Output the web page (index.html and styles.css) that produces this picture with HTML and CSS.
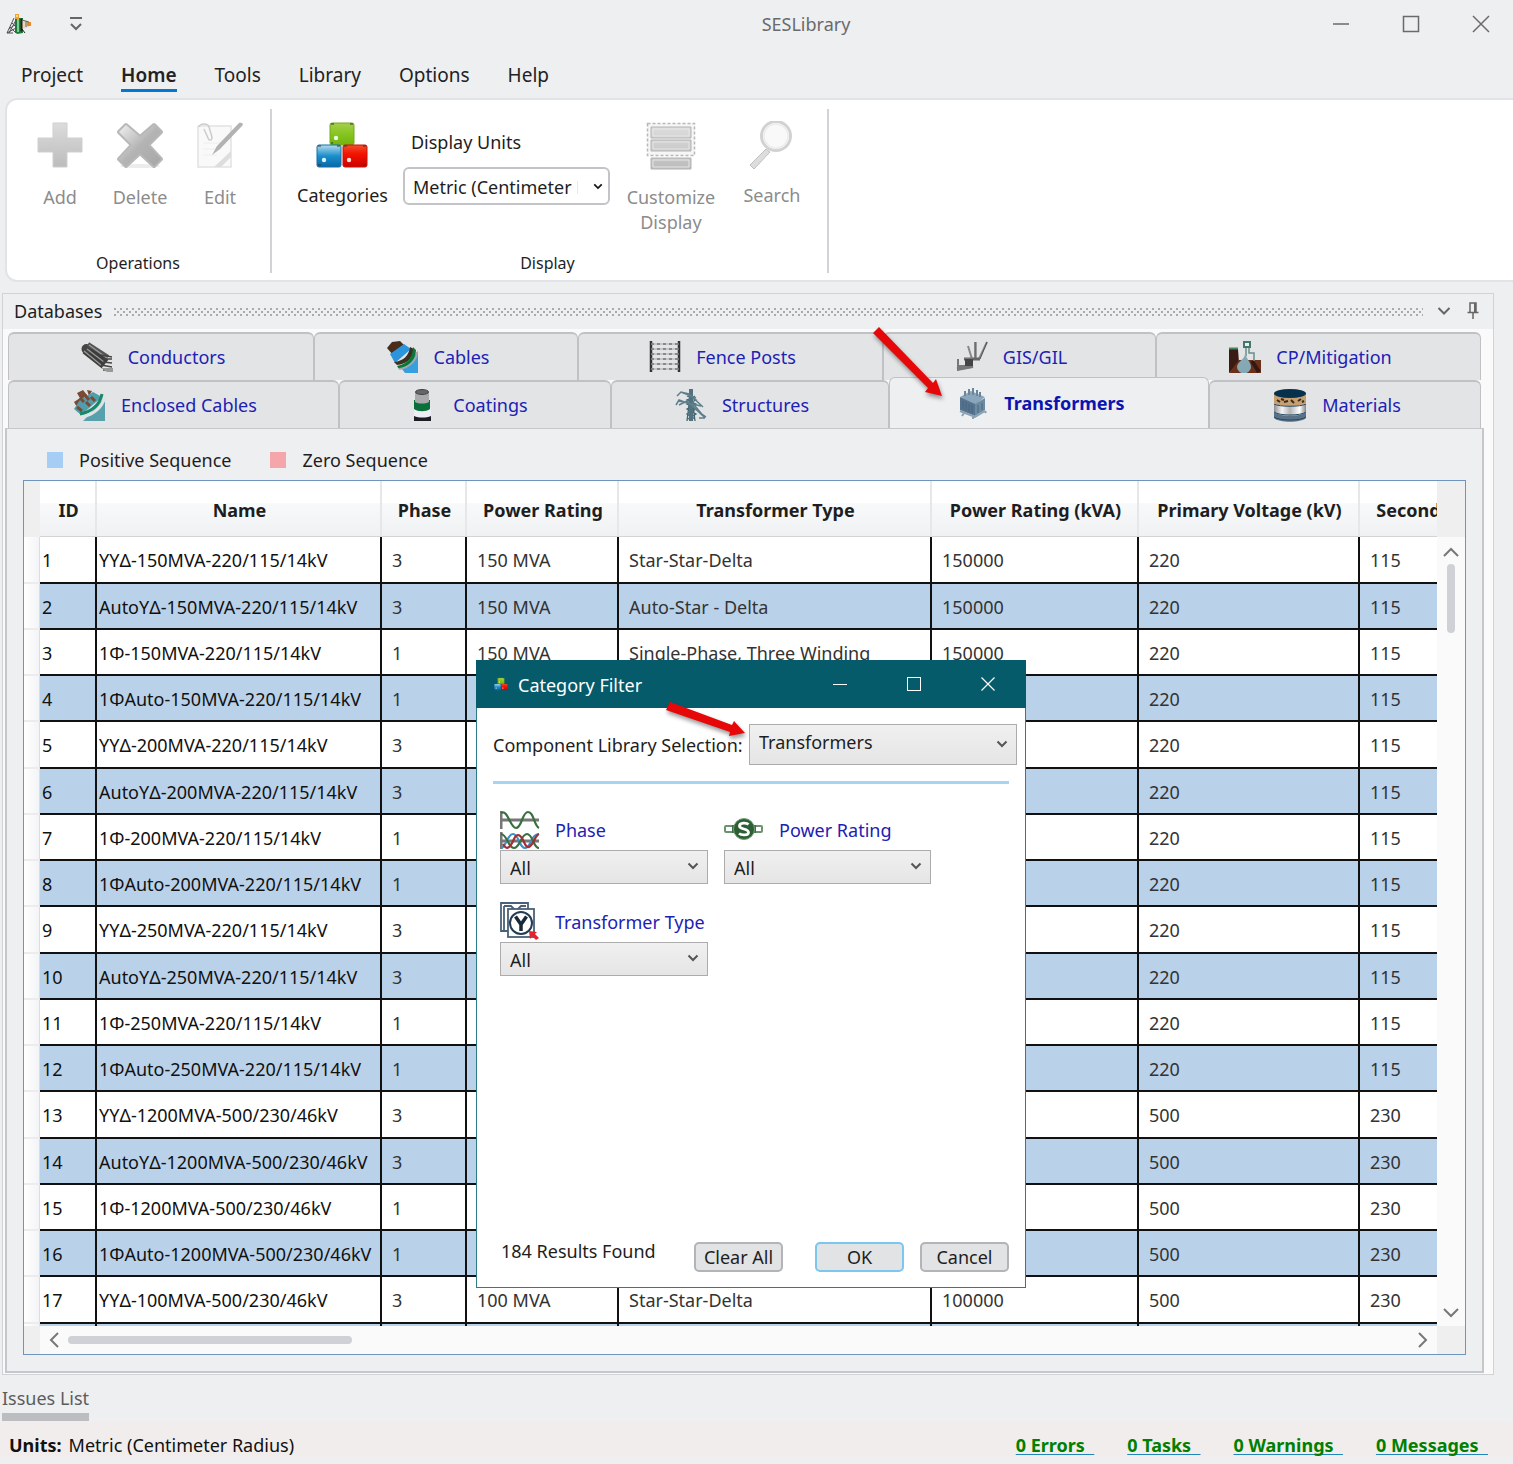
FILE: index.html
```html
<!DOCTYPE html>
<html lang="en">
<head>
  <meta charset="UTF-8" />
  <meta name="viewport" content="width=device-width, initial-scale=1.0"/>
  <title>SESLibrary</title>
  <link rel="stylesheet" href="styles.css">
</head>
<body>

  <!-- Shared gradients and symbols -->
  <svg class="defs" width="0" height="0" aria-hidden="true">
    <defs>
      <linearGradient id="gray" x1="0" y1="0" x2="0" y2="1"><stop offset="0" stop-color="#dcdcdc"/><stop offset="1" stop-color="#bcbcbc"/></linearGradient>
      <linearGradient id="grayDiag" x1="0" y1="0" x2="1" y2="1"><stop offset="0" stop-color="#f0f0f0"/><stop offset=".5" stop-color="#b4b4b4"/><stop offset="1" stop-color="#a6a6a6"/></linearGradient>
      <linearGradient id="green" x1="0" y1="0" x2="0" y2="1"><stop offset="0" stop-color="#a4cf4c"/><stop offset=".5" stop-color="#86c520"/><stop offset="1" stop-color="#74b20c"/></linearGradient>
      <linearGradient id="blue" x1="0" y1="0" x2="0" y2="1"><stop offset="0" stop-color="#b4dcee"/><stop offset=".5" stop-color="#1b8ecb"/><stop offset="1" stop-color="#0867a8"/></linearGradient>
      <linearGradient id="red" x1="0" y1="0" x2="0" y2="1"><stop offset="0" stop-color="#f2502c"/><stop offset=".4" stop-color="#f41400"/><stop offset="1" stop-color="#cc0000"/></linearGradient>
      <linearGradient id="steel" x1="0" y1="0" x2="1" y2="0"><stop offset="0" stop-color="#8d8f92"/><stop offset=".25" stop-color="#f4f4f4"/><stop offset=".5" stop-color="#b5b5b5"/><stop offset=".8" stop-color="#fff"/><stop offset="1" stop-color="#85878a"/></linearGradient>
      <symbol id="cubes" viewBox="0 0 52 46">
        <rect x="14" y="1" width="24" height="22" rx="2" fill="url(#green)" stroke="#76a81c"/>
        <rect x="1" y="23" width="24" height="22" rx="2" fill="url(#blue)" stroke="#1470a8"/>
        <rect x="27" y="23" width="24" height="22" rx="2" fill="url(#red)" stroke="#c81408"/>
        <path d="M15 2h3M34 2h3M15 21h2M2 24h3M21 24h3M28 24h3M47 24h3M2 43h3M47 43h3" stroke="#333" stroke-opacity=".5" stroke-width="2"/>
        <circle cx="20" cy="16" r="2.2" fill="#e8ffe0"/><circle cx="8" cy="38" r="2.2" fill="#d8f4ff"/><circle cx="33" cy="38" r="2.2" fill="#ffe0dc"/>
      </symbol>
      <symbol id="chevron" viewBox="0 0 12 8"><path d="M1.5 1.5 6 6l4.500-4.500" fill="none" stroke="currentColor" stroke-width="2"/></symbol>
    </defs>
  </svg>

  <header class="titlebar">
    <div class="quick">
      <svg width="27" height="22" viewBox="0 0 27 22">
        <path d="M1 20 8 5M3 20 10 7M1 20l9-5M4 14l6 6M3 16l7-5M6 10l4 4M1 20h6" stroke="#555" fill="none"/>
        <path d="M9 5h8v15l-6 1-2-2z" fill="#1d7a3a"/><path d="M11 6h2v13h-2z" fill="#7cd090"/>
        <path d="M16 7l7 2v5l-7 2z" fill="#e8d8b8"/><path d="M15 6h1v12h-1zM16 16l3 4" fill="#222" stroke="#222"/>
        <path d="M21 9h4v4h-4z" fill="#e88828"/><path d="M20 8v6M16 7l7 2" stroke="#665"/>
        <path d="M9 1h4v5H9z" fill="#f0a030"/><circle cx="11" cy="3" r="1" fill="#fff0a0"/>
      </svg>
      <button class="plain" aria-label="Customize quick access"><svg width="14" height="16" viewBox="0 0 14 16"><path d="M1 2h12M2 8l5 5 5-5" fill="none" stroke="#666" stroke-width="2"/></svg></button>
    </div>
    <h1>SESLibrary</h1>
    <div class="controls">
      <button class="plain" aria-label="Minimize"><svg width="18" height="18"><path d="M1 9h16" stroke="#6a6a6a" stroke-width="1.500"/></svg></button>
      <button class="plain" aria-label="Maximize"><svg width="18" height="18"><rect x="1.500" y="1.500" width="15" height="15" fill="none" stroke="#6a6a6a" stroke-width="1.500"/></svg></button>
      <button class="plain" aria-label="Close"><svg width="18" height="18"><path d="M1 1l16 16M17 1 1 17" stroke="#6a6a6a" stroke-width="1.500"/></svg></button>
    </div>
  </header>

  <nav class="menu">
    <a href="#">Project</a>
    <a href="#" class="current">Home</a>
    <a href="#">Tools</a>
    <a href="#">Library</a>
    <a href="#">Options</a>
    <a href="#">Help</a>
  </nav>

  <div class="ribbon">
    <section class="group operations">
      <div class="tools">
        <button class="tool" disabled>
          <svg width="48" height="48" viewBox="0 0 48 48"><path d="M17 2h14v15h15v14H31v15H17V31H2V17h15z" fill="url(#gray)" stroke="#cfcfcf"/></svg>
          Add
        </button>
        <button class="tool" disabled>
          <svg width="48" height="48" viewBox="0 0 48 48"><ellipse cx="24" cy="45" rx="20" ry="2" fill="#ececec"/><path d="M10 4 24 16 38 4l7 7-13 13 13 14-7 7-14-13-14 13-7-7 13-14L3 11z" fill="url(#grayDiag)" stroke="#b8b8b8" stroke-linejoin="round" stroke-width="4"/><path d="M10 4 24 16 38 4l7 7-13 13 13 14-7 7-14-13-14 13-7-7 13-14L3 11z" fill="url(#grayDiag)"/></svg>
          Delete
        </button>
        <button class="tool" disabled>
          <svg width="48" height="48" viewBox="0 0 48 48"><path d="M2 5h33v41H2z" fill="#f9f9f9" stroke="#e2e2e2" stroke-width="1.500"/><path d="M7 22h22M7 28h18M7 34h14" stroke="#eee"/><path d="M18 46 35 30v6L25 46z" fill="#ddd"/><path d="M3 6c1-4 9-4 10 0l3 10c0 4-3 4-4 1L8 8" fill="none" stroke="#ccc" stroke-width="1.500"/><path d="M43 2c3-1 5 1 3 3L24 28l-8 6 5-9z" fill="#b2b2b2"/></svg>
          Edit
        </button>
      </div>
      <h2>Operations</h2>
    </section>

    <section class="group display">
      <div class="tools">
        <button class="tool">
          <svg width="52" height="48"><use href="#cubes" width="52" height="48"/></svg>
          Categories
        </button>
        <div class="units">
          <label for="units">Display Units</label>
          <div class="select rounded">
            <select id="units"><option>Metric (Centimeter Radius)</option></select>
            <svg width="10" height="7"><use href="#chevron"/></svg>
          </div>
        </div>
        <button class="tool customize" disabled>
          <svg width="50" height="50" viewBox="0 0 50 50"><path d="M1.500 2.500h47v32h-47z" fill="#f6f6f6" stroke="#b8b8b8" stroke-width="1.500" stroke-dasharray="3 2"/><g fill="url(#gray)" stroke="#b4b4b4"><path d="M5 6h40v11H5zM5 19h40v11H5zM5 37h40v11H5z"/></g><path d="M7 8h36v7H7zM7 21h36v7H7zM7 39h36v7H7z" fill="none" stroke="#e6e6e6"/></svg>
          Customize Display
        </button>
        <button class="tool" disabled>
          <svg width="48" height="48" viewBox="0 0 48 48"><path d="M18 28 2 44l4 4 16-17z" fill="#ddd" stroke="#c0c0c0"/><circle cx="28" cy="15" r="14.500" fill="#f9f9f9" stroke="#d2d2d2" stroke-width="3"/><circle cx="28" cy="15" r="12" fill="none" stroke="#eee" stroke-width="2"/></svg>
          Search
        </button>
      </div>
      <h2>Display</h2>
    </section>
  </div>

  <main class="panel">
    <div class="panel-head">
      <h2>Databases</h2>
      <div class="grip"></div>
      <button class="plain" aria-label="Panel menu"><svg width="14" height="10" viewBox="0 0 14 10"><path d="M1.500 2 7 7.500 12.500 2" fill="none" stroke="#666" stroke-width="2"/></svg></button>
      <button class="plain" aria-label="Pin panel"><svg width="12" height="17" viewBox="0 0 12 17"><path d="M3 10V1h6v9M.5 10.500h11M6 10.500V17" fill="none" stroke="#666" stroke-width="1.500"/><path d="M7 1h2v9H7z" fill="#666"/></svg></button>
    </div>

    <div class="tabs" role="tablist">
      <div class="tab-row upper">
        <button class="tab" role="tab">
          <svg width="32" height="32" viewBox="0 0 32 32"><path d="M5 8 24 23" stroke="#3c3c3c" stroke-width="11"/><circle cx="5.500" cy="8" r="5" fill="#444"/><path d="M7 3 27 16" stroke="#555" stroke-width="4"/><path d="M3 10 20 24M6 8l17 13M8 4l18 13" stroke="#999" stroke-width="1.300"/><path d="M20 14l11 2M22 18h9M22 21l9 1M20 24l11 2M22 29h9" stroke="#444" stroke-width="1.500"/><path d="M20 27h12v4h-6z" fill="#999"/></svg>
          Conductors
        </button>
        <button class="tab" role="tab">
          <svg width="32" height="32" viewBox="0 0 32 32"><path d="M15 28 31 10v22H18z" fill="#379fdd"/><path d="M5 1 13 0l5 5-12 9-6-7z" fill="#4a2c1a"/><path d="M3 13 17 3l7 5L8 22z" fill="#2a94dc"/><path d="M7 21C17 20 22 14 23 6l4 2c-1 10-8 15-17 16z" fill="#3c3020"/><path d="M10 25C20 23 26 17 26 6l3 3c0 10-8 17-17 19z" fill="#0a7838"/><path d="M12 28c10-1 18-9 18-17" fill="none" stroke="#a4a8ac" stroke-width="2"/></svg>
          Cables
        </button>
        <button class="tab" role="tab">
          <svg width="32" height="32" viewBox="0 0 32 32"><path d="M2 0v31M30 0v31" stroke="#333" stroke-width="2.500"/><path d="M2 3h28M2 8h28M2 13h28M2 18h28M2 23h28M2 28h28" stroke="#aaa" stroke-width="1.200"/><path d="M2 3h28M2 8h28M2 13h28M2 18h28M2 23h28M2 28h28" stroke="#777" stroke-width="1.500" stroke-dasharray="3 3"/></svg>
          Fence Posts
        </button>
        <button class="tab" role="tab">
          <svg width="32" height="32" viewBox="0 0 32 32"><path d="M31 1 23 18M19 1v16M12 5l4 13" stroke="#888" stroke-width="2"/><path d="M31 1 24 18M20 1v16" stroke="#555"/><path d="M8 18h16M1 28l16-3" stroke="#666" stroke-width="3"/><path d="M1 18v12l16-3V17H9v7H3v-6z" fill="#777"/><path d="M9 18h8v7H9z" fill="#444"/></svg>
          GIS/GIL
        </button>
        <button class="tab" role="tab">
          <svg width="32" height="32" viewBox="0 0 32 32"><path d="M0 8h9l1 14-10 10z" fill="#3a1c14"/><path d="M0 7.500h9" stroke="#3f8a60" stroke-width="2"/><path d="M0 32l10-13h22v13z" fill="#6b301c"/><path d="M23 20l7 11" stroke="#351810" stroke-width="4"/><path d="M15 1h6v5h-6z" fill="#e8f0ee" stroke="#44786c" stroke-width="2"/><path d="M17 7v8M20 7v5h5v8" fill="none" stroke="#6a9088" stroke-width="1.500"/><path d="M16 13c0 5-8 8-8 13a6.500 6 0 0 0 14 0c0-5-5-8-5-13z" fill="#84a8b4"/></svg>
          CP/Mitigation
        </button>
      </div>
      <div class="tab-row lower">
        <button class="tab" role="tab">
          <svg width="32" height="32" viewBox="0 0 32 32"><path d="M3 4l6-3 4 5-6 5zM13 1l5 1-3 5zM0 13l6-4 4 6-6 5z" fill="#7a4a34"/><path d="M0 20 6 11 19 3l9 5L7 26z" fill="#4f9dad"/><path d="M6 9l4 4M11 6l4 5M3 18l5 4M12 13l4 4M17 8l4 4" stroke="#7a4a34" stroke-width="3"/><path d="M12 29 31 8v24H9z" fill="#58a0ac"/><path d="M6 25C17 23 26 16 28 5" fill="none" stroke="#178868" stroke-width="3"/><path d="M9 28C20 25 28 18 31 8" fill="none" stroke="#dfe3e4" stroke-width="3"/></svg>
          Enclosed Cables
        </button>
        <button class="tab" role="tab">
          <svg width="32" height="32" viewBox="0 0 32 32"><path d="M8 26h17v6H8z" fill="#1c1c24"/><path d="M8 19h17v8c-5 2-12 2-17 0z" fill="#ededf5"/><path d="M8 11h16v9c-4 3-12 3-16 0z" fill="#087038"/><path d="M9 3h14v10c-4 2-10 2-14 0z" fill="#a8aaac"/><ellipse cx="16" cy="3" rx="6.500" ry="2.500" fill="#666" stroke="#444"/></svg>
          Coatings
        </button>
        <button class="tab" role="tab">
          <svg width="32" height="32" viewBox="0 0 32 32"><path d="M16 0l-4 32M16 0l4 32M12 7l9 4-9 4 9 5-9 5 8 5M20 7l-8 4 9 4-9 5 9 5-8 5" fill="none" stroke="#3f6674" stroke-width="1.300"/><path d="M16 0v32" stroke="#54727e" stroke-width="4"/><path d="M2 7 6 3l8 2 14 13M1 16l3-5 16 6 10 12M4 16l8-4 16 15M6 3l15 6M4 12l22 5M20 20l11 8M24 29h6" fill="none" stroke="#5d7f8b" stroke-width="1.500"/></svg>
          Structures
        </button>
        <button class="tab active" role="tab" aria-selected="true">
          <svg width="32" height="32" viewBox="0 0 32 32"><path d="M3 10 14 4l14 6-10 8z" fill="#8aa6ba"/><path d="M3 10l15 7v12L3 23z" fill="#55738f"/><path d="M18 17l10-6v12l-10 6z" fill="#6c8aa2"/><path d="M6 14v8M9 15v8M12 17v8M15 18v8M21 18v8M25 16v7" stroke="#48677f"/><path d="M8 9V4M12 8V2M16 8V1M20 9V3M23 10V5" stroke="#6a879e" stroke-width="2"/><path d="M3 24l15 6 10-6M7 26l-2 3M16 30v2M28 24l1 2" fill="none" stroke="#8aa2b4" stroke-width="2"/></svg>
          Transformers
        </button>
        <button class="tab" role="tab">
          <svg width="34" height="34" viewBox="0 0 34 34"><path d="M1 25v5c5 5 27 5 32 0v-5z" fill="#5a7288"/><path d="M1 16v8c5 5 27 5 32 0v-8z" fill="url(#steel)"/><path d="M1 6v9c5 4 27 4 32 0V6z" fill="#c8a070"/><path d="M4 12l3 2M11 14l4-1M18 12l3 3M25 13l3-2M29 14l2-1M8 11l3 1" stroke="#3c2c1c" stroke-width="2"/><ellipse cx="17" cy="5.500" rx="16" ry="4.500" fill="#06304c"/><path d="M1 16c5 3 27 3 32 0M1 24c5 4 27 4 32 0M1 29c5 4 27 4 32 0" fill="none" stroke="#284c64"/></svg>
          Materials
        </button>
      </div>
    </div>

    <div class="tab-body">
      <div class="legend">
        <span class="swatch positive"></span><span>Positive Sequence</span>
        <span class="swatch zero"></span><span>Zero Sequence</span>
      </div>

      <div class="grid">
        <div class="grid-view">
          <table>
            <colgroup>
              <col class="c-gutter"><col class="c-id"><col class="c-name"><col class="c-phase"><col class="c-rating"><col class="c-type"><col class="c-kva"><col class="c-primary"><col class="c-secondary">
            </colgroup>
            <thead>
              <tr><td></td><th>ID</th><th>Name</th><th>Phase</th><th>Power Rating</th><th>Transformer Type</th><th>Power Rating (kVA)</th><th>Primary Voltage (kV)</th><th>Secondary Voltage (kV)</th></tr>
            </thead>
            <tbody id="rows"></tbody>
          </table>
        </div>
        <div class="vscroll">
          <div class="corner"></div>
          <svg width="16" height="10" viewBox="0 0 16 10"><path d="M1 9l7-7 7 7" fill="none" stroke="#777" stroke-width="2"/></svg>
          <div class="thumb"></div>
          <svg width="16" height="10" viewBox="0 0 16 10"><path d="M1 1l7 7 7-7" fill="none" stroke="#777" stroke-width="2"/></svg>
        </div>
        <div class="hscroll">
          <div class="corner"></div>
          <svg width="10" height="16" viewBox="0 0 10 16"><path d="M9 1 2 8l7 7" fill="none" stroke="#777" stroke-width="2"/></svg>
          <div class="thumb"></div>
          <svg width="10" height="16" viewBox="0 0 10 16"><path d="M1 1l7 7-7 7" fill="none" stroke="#777" stroke-width="2"/></svg>
        </div>
        <div class="corner"></div>
      </div>
    </div>
  </main>

  <div class="issues"><button class="plain">Issues List</button></div>

  <footer class="status">
    <strong>Units:</strong>
    <span>Metric (Centimeter Radius)</span>
    <div class="counts">
      <a href="#">0 Errors&nbsp;&nbsp;</a>
      <a href="#">0 Tasks&nbsp;&nbsp;</a>
      <a href="#">0 Warnings&nbsp;&nbsp;</a>
      <a href="#">0 Messages&nbsp;&nbsp;</a>
    </div>
  </footer>

  <div class="dialog" role="dialog" aria-labelledby="dialog-title">
    <div class="dialog-title">
      <svg width="14" height="14"><use href="#cubes"/></svg>
      <h2 id="dialog-title">Category Filter</h2>
      <button class="plain" aria-label="Minimize filter"><svg width="14" height="14"><path d="M0 7.500h14" stroke="#fff"/></svg></button>
      <button class="plain" aria-label="Maximize filter"><svg width="14" height="14"><rect x=".5" y=".5" width="13" height="13" fill="none" stroke="#fff"/></svg></button>
      <button class="plain" aria-label="Close filter"><svg width="14" height="14"><path d="M.5.5l13 13M13.500.5l-13 13" stroke="#fff" stroke-width="1.200"/></svg></button>
    </div>
    <div class="dialog-body">
      <div class="library">
        <label for="library">Component Library Selection:</label>
        <div class="select">
          <select id="library"><option>Transformers</option></select>
          <svg width="12" height="8"><use href="#chevron"/></svg>
        </div>
      </div>
      <div class="filters">
        <div class="filter">
          <label for="phase">
            <svg width="40" height="40" viewBox="0 0 40 40"><path d="M1 1v18M1 10h38M1 22v17M1 31h38" stroke="#777" stroke-width="3"/><path d="M1 3c7-4 9 15 15 15S22 2 28 2s6 14 11 16" fill="none" stroke="#3a7040" stroke-width="2.200"/><path d="M1 38c5 0 6-14 12-14s6 14 12 14 6-14 14-14" fill="none" stroke="#3f8fc8" stroke-width="2.200"/><path d="M1 24c6 0 7 14 13 14s7-14 13-14 6 14 12 14" fill="none" stroke="#3a7040" stroke-width="2.200"/><path d="M3 34c4 8 8 2 11-5s7-4 10 3 5 6 8 2 4-9 7-10" fill="none" stroke="#a03038" stroke-width="2.200"/></svg>
            Phase
          </label>
          <div class="select">
            <select id="phase"><option>All</option></select>
            <svg width="12" height="8"><use href="#chevron"/></svg>
          </div>
        </div>
        <div class="filter">
          <label for="rating">
            <svg width="40" height="40" viewBox="0 0 40 40"><rect x="1" y="16" width="10" height="6" rx="1" fill="#fff" stroke="#6a946c" stroke-width="2"/><rect x="29" y="16" width="9" height="6" rx="1" fill="#fff" stroke="#6a946c" stroke-width="2"/><path d="M8 15h3v8H8zM29 15h3v8h-3z" fill="#3a7040"/><circle cx="20" cy="19" r="10.500" fill="#2c6034" stroke="#78a07c"/><path d="M24.500 14.500c-2-2-9-2-9 1.500 0 4 9 2 9 6.500 0 3-7 3-9.500 1" fill="none" stroke="#fff" stroke-width="2.800"/></svg>
            Power Rating
          </label>
          <div class="select">
            <select id="rating"><option>All</option></select>
            <svg width="12" height="8"><use href="#chevron"/></svg>
          </div>
        </div>
        <div class="filter">
          <label for="type">
            <svg width="40" height="40" viewBox="0 0 40 40"><path d="M1 1h27v28H1zM4 4h7l4 4M26 4h-5l-4 4M4 4v24" fill="#fff" stroke="#4a6078" stroke-width="1.800"/><rect x="8" y="7" width="26" height="28" fill="#fff" stroke="#4a6078" stroke-width="1.800"/><circle cx="21" cy="21" r="11" fill="#fff" stroke="#243c54" stroke-width="2"/><path d="M15.500 14.500l5.500 8 5.500-8M21 22v7" fill="none" stroke="#182838" stroke-width="3.500"/><path d="M29 29l8 1-2 2 4 4-3 2-4-4-2 3z" fill="#e8202c"/></svg>
            Transformer Type
          </label>
          <div class="select">
            <select id="type"><option>All</option></select>
            <svg width="12" height="8"><use href="#chevron"/></svg>
          </div>
        </div>
      </div>
      <div class="dialog-foot">
        <span>184 Results Found</span>
        <button class="btn">Clear All</button>
        <button class="btn ok">OK</button>
        <button class="btn">Cancel</button>
      </div>
    </div>
    <svg class="pointer to-library" width="90" height="44" viewBox="0 0 90 44"><path d="M5 3 1 11l64 22-1 4 16-3-11-12-2 4z" fill="#e60808"/></svg>
  </div>

  <svg class="pointer to-tab" width="80" height="80" viewBox="0 0 80 80"><path d="M7 1 1 7l55 55-3 4 17 4-6-17-3 4z" fill="#e60808"/></svg>

  <script>
    const kinds = [
      ['YYΔ', 3, 'Star-Star-Delta'],
      ['AutoYΔ', 3, 'Auto-Star - Delta'],
      ['1Φ', 1, 'Single-Phase, Three Winding'],
      ['1ΦAuto', 1, 'Single-Phase Auto']
    ];
    // MVA, primary, secondary, tertiary voltage
    const ratings = [
      [150, 220, 115, 14],
      [200, 220, 115, 14],
      [250, 220, 115, 14],
      [1200, 500, 230, 46],
      [100, 500, 230, 46]
    ];

    let html = '';
    for (let i = 0; i < 17; i++) {
      const [prefix, phase, type] = kinds[i % 4];
      const [mva, v1, v2, v3] = ratings[Math.floor(i / 4)];
      const cells = [i + 1, `${prefix}-${mva}MVA-${v1}/${v2}/${v3}kV`, phase, `${mva} MVA`, type, mva * 1000, v1, v2];
      html += '<tr><td></td>' + cells.map(c => `<td>${c}</td>`).join('') + '</tr>';
    }
    html += '<tr>' + '<td></td>'.repeat(9) + '</tr>';
    document.getElementById('rows').innerHTML = html;
  </script>

</body>
</html>
```
FILE: styles.css
```css
* {
  box-sizing: border-box;
}

body {
  font-family: "Noto Sans", "Open Sans", sans-serif;
  font-size: 18px;
  line-height: 24px;
  background: #eeeff1;
  color: #1e1e1e;
  margin: 0;
  height: 100vh;
  display: flex;
  flex-direction: column;
  position: relative;
  overflow: hidden;
}

h1, h2 {
  font-size: 18px;
  font-weight: normal;
  margin: 0;
}

button, select {
  font: inherit;
  color: inherit;
}

svg {
  display: block;
  flex: none;
}

.defs {
  position: absolute;
}

.plain {
  background: none;
  border: 0;
  padding: 0;
  display: flex;
  align-items: center;
  justify-content: center;
}

/* Title bar */
.titlebar {
  display: grid;
  grid-template-columns: 303px 1fr 204px;
  align-items: center;
  height: 47px;
  flex: none;
}
.titlebar h1 {
  text-align: center;
  color: #6a6a6a;
}
.quick {
  display: flex;
  align-items: center;
  gap: 36px;
  padding-left: 6px;
}
.controls {
  display: flex;
  gap: 6px;
}
.controls button {
  width: 64px;
  height: 46px;
}

/* Menu */
.menu {
  display: flex;
  gap: 38px;
  height: 51px;
  padding: 14px 21px 0;
  flex: none;
  font-size: 19px;
}
.menu a {
  color: #222;
  text-decoration: none;
  line-height: 28px;
  height: 31px;
}
.menu .current {
  font-weight: 600;
  border-bottom: 3px solid #0078d4;
}

/* Ribbon */
.ribbon {
  display: flex;
  margin-left: 5px;
  padding: 9px 0 7px;
  height: 184px;
  flex: none;
  background: #fff;
  border: 2px solid #e2e3e6;
  border-right: 0;
  border-radius: 12px 0 0 12px;
}
.group {
  display: flex;
  flex-direction: column;
  justify-content: space-between;
  border-right: 2px solid #d2d3d7;
}
.group h2 {
  font-size: 16px;
  line-height: 20px;
  text-align: center;
}
.tools {
  display: flex;
  padding-top: 12px;
}
.operations {
  padding: 0 10px 0 13px;
}
.operations h2 {
  padding-right: 4px;
}
.display {
  padding: 0 15px 0 25px;
}
.display .tools {
  gap: 15px;
}
.display h2 {
  padding-right: 14px;
}
.tool {
  width: 80px;
  background: none;
  border: 0;
  padding: 0;
  display: flex;
  flex-direction: column;
  align-items: center;
  gap: 16px;
  line-height: 25px;
}
.display .tool {
  width: auto;
  min-width: 80px;
  max-width: 92px;
  gap: 14px;
}
.tool:disabled {
  color: #8c8c8c;
}
.units label {
  display: block;
  padding: 9px 8px 13px;
}

/* Drop-downs */
.select {
  position: relative;
}
.select select {
  appearance: none;
  display: block;
  width: 100%;
  height: 34px;
  padding: 1px 30px 0 9px;
  border: 1px solid #acacac;
  border-radius: 0;
  background: linear-gradient(#f0f0f0, #e5e5e5);
}
.select svg {
  position: absolute;
  right: 9px;
  top: 12px;
  color: #555;
  pointer-events: none;
}
.select.rounded {
  width: 207px;
}
.select.rounded select {
  height: 38px;
  border: 2px solid #c3c4c9;
  border-radius: 6px;
  background: #fff;
  padding-left: 8px;
}
.select.rounded svg {
  right: 7px;
  top: 16px;
  color: #111;
}

/* Databases panel */
.panel {
  flex: 1;
  min-height: 0;
  display: flex;
  flex-direction: column;
  margin: 11px 19px 0 2px;
  border: 1px solid #d0d2d5;
  background: #fafafa;
}
.panel-head {
  display: flex;
  align-items: center;
  height: 35px;
  padding: 0 14px 2px 11px;
  background: #eeeff1;
}
.panel-head button {
  margin-left: 14px;
}
.panel-head button:last-child {
  margin-left: 16px;
}
.grip {
  flex: 1;
  height: 9px;
  margin: 3px 0 0 12px;
  background-image: radial-gradient(circle at 1px 1px, #a8aaac 1px, transparent 1px), radial-gradient(circle at 4px 4px, #a8aaac 1px, transparent 1px);
  background-size: 6px 6px;
}
.tabs {
  padding: 3px 12px 0 5px;
}
.tab-row {
  display: grid;
  height: 48px;
}
.upper {
  grid-template-columns: 306fr 264fr 305fr 273fr 325fr;
}
.lower {
  grid-template-columns: 331fr 272fr 278fr 320fr 272fr;
}
.tab {
  display: flex;
  align-items: center;
  justify-content: center;
  gap: 15px;
  padding: 0 16px 0 0;
  color: #1c22b4;
  background: #e3e4e6;
  border: 1px solid #c0c1c5;
  border-top-width: 2px;
  border-bottom: 0;
  border-radius: 6px 6px 0 0;
}
.tab.active {
  margin-top: -3px;
  background: #eeeff1;
  border-top-width: 1px;
  font-weight: bold;
  color: #0c14b0;
  z-index: 1;
}
.tab-body {
  flex: 1;
  min-height: 0;
  display: flex;
  flex-direction: column;
  margin: 0 9px 1px 2px;
  padding: 0 16px 16px;
  background: #eeeff1;
  border: 2px solid #c6c7ca;
  border-top-width: 1px;
}
.legend {
  display: flex;
  align-items: center;
  height: 51px;
  padding: 10px 24px 0;
  flex: none;
}
.swatch {
  width: 16px;
  height: 16px;
  margin-right: 16px;
}
.positive {
  background: #a6cdf4;
}
.zero {
  background: #f4a6ab;
  margin-left: 39px;
}

/* Data grid */
.grid {
  flex: 1;
  min-height: 0;
  display: grid;
  grid-template-columns: 1fr 28px;
  grid-template-rows: 1fr 28px;
  border: 1px solid #7095bc;
  background: #fafafa;
}
.grid-view {
  overflow: hidden;
  min-width: 0;
  min-height: 0;
}
table {
  table-layout: fixed;
  width: 1575px;
  border-collapse: separate;
  border-spacing: 0;
}
.c-gutter { width: 16px; }
.c-id { width: 57px; }
.c-name { width: 285px; }
.c-phase { width: 85px; }
.c-rating { width: 152px; }
.c-type { width: 313px; }
.c-kva { width: 207px; }
.c-primary { width: 221px; }
.c-secondary { width: 239px; }

td, th {
  padding: 0;
  white-space: nowrap;
}
thead td {
  background: #efefef;
}
th {
  height: 56px;
  padding: 2px 0 0 2px;
  background: linear-gradient(#fff 40%, #f8f9fa 41%, #f0f1f3);
  border-right: 2px solid #e6e7e9;
  border-bottom: 1px solid #d4d4d4;
  font-size: 18px;
}
tbody td {
  height: 46px;
  padding: 1px 0 0 10px;
  border-right: 2px solid #111;
  border-bottom: 2px solid #111;
  background: #fff;
  color: #333;
}
/* rows average 46 and a quarter high */
tbody tr:nth-child(4n + 1) td {
  height: 47px;
}
tbody tr:nth-child(even) td {
  background: #bad1ea;
}
tbody tr td:first-child {
  background: linear-gradient(to right, #fff, #f3f4f6);
  border-right: 1px solid #ddd;
  border-bottom: 2px solid #ececec;
}
tbody td:nth-child(2),
tbody td:nth-child(3) {
  padding-left: 2px;
  color: #111;
}

.corner {
  background: #efefef;
}
.thumb {
  background: #cfd1d6;
  border-radius: 4px;
}
.vscroll {
  display: flex;
  flex-direction: column;
  align-items: center;
  padding-bottom: 8px;
}
.vscroll .corner {
  width: 28px;
  height: 56px;
  margin-bottom: 10px;
}
.vscroll .thumb {
  width: 8px;
  height: 69px;
  margin: 7px 0 auto;
}
.hscroll {
  display: flex;
  align-items: center;
  padding-right: 9px;
}
.hscroll .corner {
  width: 16px;
  height: 28px;
  margin-right: 9px;
}
.hscroll .thumb {
  width: 284px;
  height: 8px;
  margin: 0 auto 0 9px;
}

/* Bottom bars */
.issues {
  padding: 11px 2px 1px;
  flex: none;
}
.issues button {
  color: #5c5c5c;
  padding-bottom: 3px;
  border-bottom: 8px solid #bcbdc1;
}
.status {
  display: flex;
  align-items: center;
  gap: 7px;
  height: 35px;
  margin-bottom: 7px;
  padding: 11px 25px 0 9px;
  flex: none;
  background: #f0edec;
  color: #111;
}
.counts {
  display: flex;
  gap: 33px;
  margin-left: auto;
}
.counts a {
  color: #007f00;
  font-weight: bold;
  text-decoration: underline #1f88b8 1px;
  text-underline-offset: 2px;
  text-decoration-skip-ink: none;
}

/* Category filter window */
.dialog {
  position: absolute;
  left: 476px;
  top: 660px;
  width: 550px;
  height: 628px;
  display: flex;
  flex-direction: column;
  background: #fff;
  border: 1px solid #2b7d88;
}
.dialog-title {
  display: flex;
  align-items: center;
  height: 48px;
  margin: -1px -1px 0;
  padding: 0 1px 0 18px;
  background: #065b6b;
  color: #fff;
}
.dialog-title h2 {
  margin: 2px auto 0 10px;
}
.dialog-title button {
  width: 74px;
  height: 46px;
}
.dialog-body {
  flex: 1;
  display: flex;
  flex-direction: column;
  padding: 16px 16px 15px;
}
.library {
  display: flex;
  align-items: center;
  justify-content: space-between;
  margin-right: -8px;
}
.library .select {
  width: 268px;
}
.library select {
  height: 41px;
  padding-bottom: 6px;
}
.library .select svg {
  top: 16px;
}
.filters {
  display: grid;
  grid-template-columns: 208px 207px;
  gap: 17px 16px;
  margin-top: 16px;
  padding: 25px 7px 0;
  border-top: 3px solid #a5d5f0;
}
.filter label {
  display: flex;
  align-items: center;
  gap: 15px;
  height: 41px;
  color: #1c22b4;
}
.dialog-foot {
  display: flex;
  align-items: flex-end;
  gap: 16px;
  margin-top: auto;
}
.dialog-foot span {
  margin: 0 auto 9px 8px;
}
.btn {
  width: 89px;
  height: 30px;
  padding: 0;
  background: #e2e3e5;
  border: 2px solid #b3b4b8;
  border-radius: 5px;
}
.ok {
  border-color: #7cc6f0;
  margin-left: 16px;
}

/* Red pointers laid over the window */
.pointer {
  position: absolute;
  filter: drop-shadow(1px 3px 2px rgba(0, 0, 0, .4));
}
.to-library {
  left: 188px;
  top: 38px;
}
.to-tab {
  left: 872px;
  top: 326px;
  z-index: 2;
}
```
